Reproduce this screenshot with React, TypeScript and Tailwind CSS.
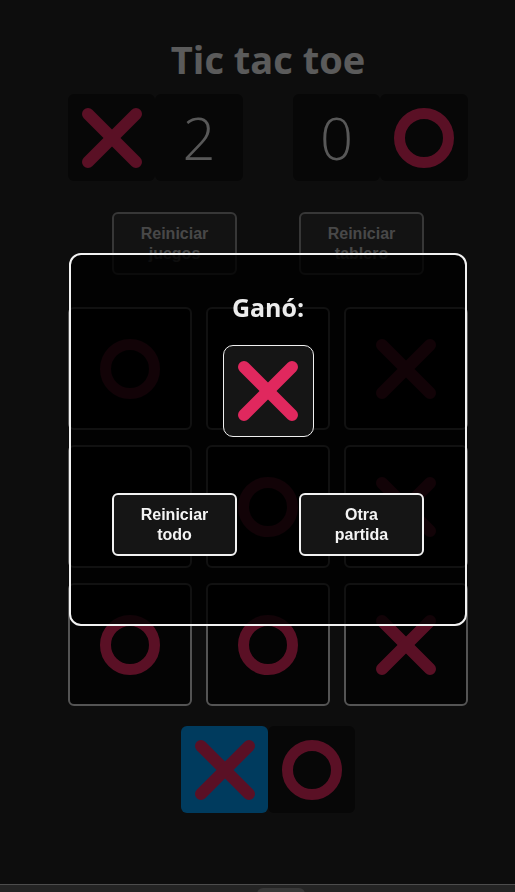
import React from "react";

const PINK = "#e0285e";

function XMark({ size = 60 }: { size?: number }) {
  return (
    <svg width={size} height={size} viewBox="0 0 60 60">
      <line x1="6" y1="6" x2="54" y2="54" stroke={PINK} strokeWidth="12" strokeLinecap="round" />
      <line x1="54" y1="6" x2="6" y2="54" stroke={PINK} strokeWidth="12" strokeLinecap="round" />
    </svg>
  );
}

function OMark({ size = 60 }: { size?: number }) {
  return (
    <svg width={size} height={size} viewBox="0 0 60 60">
      <circle cx="30" cy="30" r="24.5" fill="none" stroke={PINK} strokeWidth="11" />
    </svg>
  );
}

const board: ("x" | "o" | null)[] = ["o", null, "x", null, "o", "x", "o", "o", "x"];

export default function App() {
  return (
    <div className="min-h-screen bg-[#212121]" style={{ fontFamily: '"Open Sans", "Noto Sans", sans-serif' }}>
      <div className="h-[884px] flex justify-center pl-[21px]">
        <div className="relative w-[400px] flex flex-col items-center pt-[36px]">
          <h1 className="text-[38px] leading-[46px] font-bold text-[#e4e4e4]">Tic tac toe</h1>

          {/* marcador */}
          <div className="mt-[12px] w-full flex justify-between">
            <div className="flex">
              <div className="w-[87px] h-[87px] rounded-md bg-[#121212] flex items-center justify-center">
                <XMark />
              </div>
              <div className="w-[88px] h-[87px] rounded-md bg-[#121212] flex items-center justify-center text-[58px] font-light text-[#dcdcdc]">
                2
              </div>
            </div>
            <div className="flex">
              <div className="w-[87px] h-[87px] rounded-md bg-[#121212] flex items-center justify-center text-[58px] font-light text-[#dcdcdc]">
                0
              </div>
              <div className="w-[88px] h-[87px] rounded-md bg-[#121212] flex items-center justify-center">
                <OMark />
              </div>
            </div>
          </div>

          <div className="mt-[31px] flex gap-[62px]" style={{ fontFamily: '"Liberation Sans", Arial, sans-serif' }}>
            <button className="w-[125px] h-[63px] rounded-md border-2 border-[#8a8a8a] bg-[#303030] text-[#b4b4b4] font-bold text-[16px] leading-5">
              Reiniciar
              <br />
              juegos
            </button>
            <button className="w-[125px] h-[63px] rounded-md border-2 border-[#8a8a8a] bg-[#303030] text-[#b4b4b4] font-bold text-[16px] leading-5">
              Reiniciar
              <br />
              tablero
            </button>
          </div>

          {/* tablero */}
          <div className="mt-[32px] grid grid-cols-3 gap-x-[14px] gap-y-[15px] w-full">
            {board.map((c, i) => (
              <div
                key={i}
                className="h-[123px] rounded-md border-2 border-[#d2d2d2] bg-[#0a0a0a] flex items-center justify-center"
              >
                {c === "x" ? <XMark /> : c === "o" ? <OMark /> : null}
              </div>
            ))}
          </div>

          {/* turno */}
          <div className="mt-[20px] flex">
            <div className="w-[87px] h-[87px] rounded-md bg-[#0094eb] flex items-center justify-center">
              <XMark />
            </div>
            <div className="w-[87px] h-[87px] rounded-md bg-[#121212] flex items-center justify-center">
              <OMark />
            </div>
          </div>

          <div className="fixed inset-0 bg-black/60 z-10" />

          {/* modal */}
          <div className="absolute z-20 left-[1px] top-[253px] w-[398px] h-[373px] rounded-xl border-2 border-[#f2f2f2] bg-black/80 flex flex-col items-center pt-[36px]">
            <h2 className="text-[25px] leading-[32px] font-bold text-[#ececec]">Ganó:</h2>
            <div className="mt-[22px] w-[91px] h-[92px] rounded-[10px] border-[1.5px] border-[#f0f0f0] bg-[#151515] flex items-center justify-center">
              <XMark />
            </div>
            <div className="mt-[56px] flex gap-[62px]" style={{ fontFamily: '"Liberation Sans", Arial, sans-serif' }}>
              <button className="w-[125px] h-[63px] rounded-md border-2 border-[#f2f2f2] bg-[#151515] text-[#f4f4f4] font-bold text-[16px] leading-5">
                Reiniciar
                <br />
                todo
              </button>
              <button className="w-[125px] h-[63px] rounded-md border-2 border-[#f2f2f2] bg-[#151515] text-[#f4f4f4] font-bold text-[16px] leading-5">
                Otra
                <br />
                partida
              </button>
            </div>
          </div>
        </div>
      </div>
      <div className="relative z-30 h-[40px] border-t border-[#4d4d4d] bg-[#242424]">
        <div className="ml-[257px] mt-[3px] w-[48px] h-[20px] rounded-t-md bg-[#383838]" />
      </div>
    </div>
  );
}
